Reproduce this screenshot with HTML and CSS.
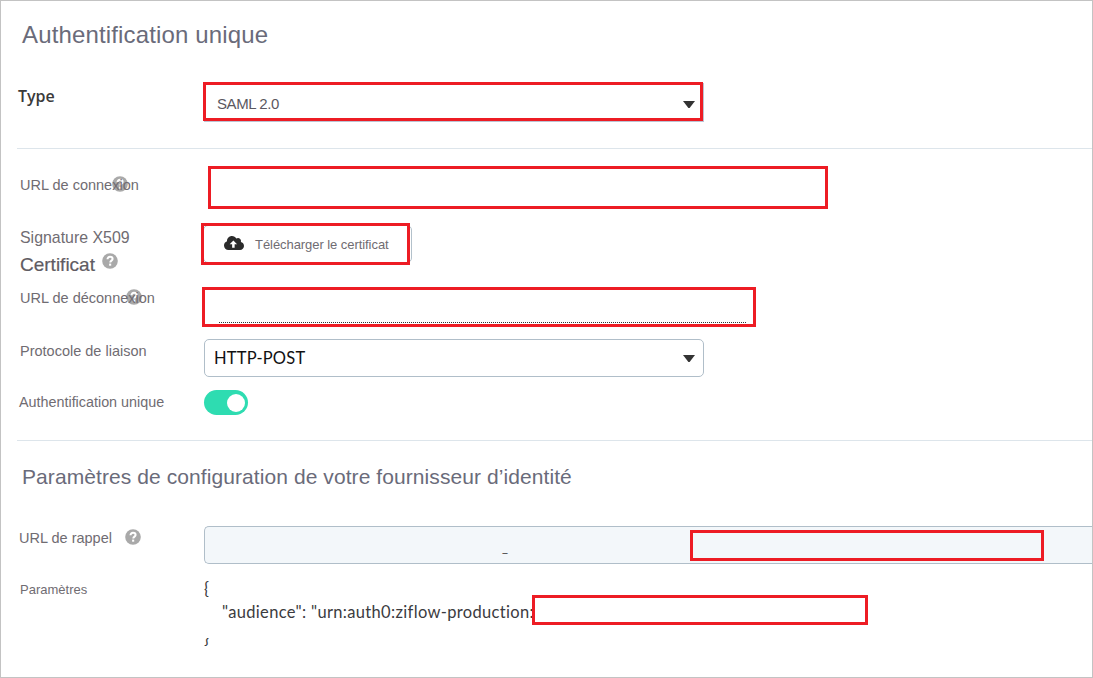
FILE: index.html
```html
<!DOCTYPE html>
<html lang="fr">
<head>
<meta charset="utf-8">
<title>Authentification unique</title>
<link rel="stylesheet" href="styles.css">
</head>
<body>
<svg width="0" height="0" class="defs">
  <symbol id="help" viewBox="0 0 16 16">
    <circle cx="8" cy="8" r="7.8" fill="#a9a9a9"/>
    <path d="M5.5 6.3C5.5 4.6 6.6 3.8 8 3.8s2.6.9 2.6 2.2c0 1.6-2.3 1.7-2.3 3.4" fill="none" stroke="#fff" stroke-width="2"/>
    <path d="M7.1 10.6h2.1v2.1H7.1z" fill="#fff"/>
  </symbol>
</svg>
<main class="page">
  <header class="heading"><h1 class="title">Authentification unique</h1></header>

  <section class="group">
    <div class="row row-type">
      <div class="label type-label">Type</div>
      <div class="marked type-select"><span>SAML 2.0</span><i class="caret"></i></div>
    </div>
  </section>

  <section class="group">
    <div class="row row-login">
      <div class="label">URL de connexion<svg class="help over"><use href="#help"/></svg></div>
      <div class="marked login-input"></div>
    </div>
    <div class="row row-cert">
      <div class="label cert-label">
        <div class="signature">Signature X509</div>
        <div class="cert-line"><span>Certificat</span><svg class="help"><use href="#help"/></svg></div>
      </div>
      <div class="upload-wrap">
        <div class="upload">
          <svg class="cloud" viewBox="0 32 640 448"><path fill="#2b2b2b" d="M537.6 226.6c4.1-10.7 6.4-22.4 6.4-34.6 0-53-43-96-96-96-19.7 0-38.1 6-53.3 16.2C367 64.2 315.3 32 256 32c-88.4 0-160 71.6-160 160 0 2.7.1 5.4.2 8.1C40.2 219.8 0 273.2 0 336c0 79.5 64.5 144 144 144h368c70.7 0 128-57.3 128-128 0-61.9-44-113.6-102.4-125.4z"/><path fill="#fff" d="M300 172L418 292H340V410H260V292H182z"/></svg>
          <span>Télécharger le certificat</span>
        </div>
      </div>
    </div>
    <div class="row row-logout">
      <div class="label">URL de déconnexion<svg class="help over"><use href="#help"/></svg></div>
      <div class="marked logout-input"><div class="dots"></div></div>
    </div>
    <div class="row row-binding">
      <div class="label">Protocole de liaison</div>
      <div class="select"><span>HTTP-POST</span><i class="caret"></i></div>
    </div>
    <div class="row row-sso">
      <div class="label">Authentification unique</div>
      <div class="toggle"><i class="knob"></i></div>
    </div>
  </section>

  <header class="heading second"><h2 class="subtitle">Paramètres de configuration de votre fournisseur d’identité</h2></header>

  <section class="group last">
    <div class="row row-callback">
      <div class="label callback-label"><span>URL de rappel</span><svg class="help"><use href="#help"/></svg></div>
      <div class="callback"><span class="underscore">_</span><div class="marked callback-mark"></div></div>
    </div>
    <div class="row row-params">
      <div class="label params-label">Paramètres</div>
      <div class="code">
        <div>{</div>
        <div class="audience"><span>"audience": "urn:auth0:ziflow-production:</span><i class="marked audience-mark"></i></div>
        <div class="closing">}</div>
      </div>
    </div>
  </section>
</main>
</body>
</html>
```
FILE: styles.css
```css
* { box-sizing: border-box; }
body { margin: 0; background: #fff; }
.defs { position: absolute; }
.page {
  width: 1093px; height: 678px; overflow: hidden;
  border: 1px solid #c3c3c3;
  font: 14.5px/20px "Liberation Sans", Arial, sans-serif;
  color: #706c72;
}
.heading { height: 75px; padding: 20px 0 0 21px; }
.title, .subtitle { margin: 0; font-weight: 400; line-height: 28px; color: #6a6b7a; white-space: nowrap; }
.title { font-size: 24px; letter-spacing: .15px; }
.subtitle { font-size: 21px; letter-spacing: .08px; }
.group { margin-left: 16px; border-bottom: 1px solid #dde5eb; }
.group.last { border: 0; }
.row { display: flex; align-items: flex-start; }
.label { position: relative; flex: none; width: 187px; padding-left: 3px; white-space: nowrap; }
.marked { border: 3px solid #ed1c24; }
.help { display: block; width: 16px; height: 16px; }
.over { position: absolute; z-index: -1; }
.caret {
  width: 12px; height: 7px; background: #333;
  clip-path: polygon(0 0, 100% 0, 55% 100%, 45% 100%);
}

.row-type { height: 72px; }
.type-label { margin-top: 10px; padding-left: 1px; width: 186px; font: 600 16px/20px "Open Sans", sans-serif; color: #3a3a3a; }
.type-select {
  display: flex; justify-content: space-between; width: 500px; height: 39px; margin-top: 6px;
  padding: 9px 5px 0 11px; font-size: 15px; letter-spacing: -.42px; color: #5b585f;
  box-shadow: 1px 1px 0 #bcc3d3;
}
.type-select .caret { margin-top: 7px; }

.row-login { height: 66px; }
.row-login .label { width: 191px; margin-top: 26px; }
.row-login .over { left: 95px; top: 1px; }
.login-input { width: 620px; height: 43px; margin-top: 17px; }

.row-cert { height: 65px; }
.cert-label { width: 184px; margin-top: 13px; }
.signature { font-size: 15.9px; }
.cert-line { display: flex; gap: 7px; margin-top: 5px; font-size: 19px; line-height: 24px; color: #5f5b62; -webkit-text-stroke: .2px #5f5b62; }
.upload-wrap { position: relative; width: 211px; height: 42px; margin-top: 8px; padding: 2px 0 0 2px; }
.upload-wrap::after { content: ""; box-sizing: border-box; position: absolute; left: 0; top: 0; width: 209px; height: 42px; border: 3px solid #ed1c24; }
.upload {
  display: flex; width: 209px; height: 38px; padding: 9px 0 0 20px; gap: 11px;
  border: 1px solid #b3c1cb; border-radius: 5px; font-size: 13px; letter-spacing: -.06px; white-space: nowrap;
}
.cloud { width: 20px; height: 14px; margin-top: 1px; }

.row-logout { height: 52px; }
.row-logout .label { width: 185px; margin-top: 8px; }
.row-logout .over { left: 109px; top: 1px; }
.logout-input { width: 554px; height: 40px; margin-top: 7px; padding: 32px 7px 0 14px; }
.dots { height: 1px; background: repeating-linear-gradient(90deg, #333 0 1px, #fff 1px 2px); }

.row-binding { height: 52px; }
.row-binding .label { margin-top: 9px; }
.select {
  display: flex; justify-content: space-between; width: 500px; height: 38px; margin-top: 7px;
  padding: 8px 8px 0 9px; border: 1px solid #b0bec9; border-radius: 5px;
  font: 16.5px/20px Lato, sans-serif; letter-spacing: .2px; color: #111;
}
.select .caret { margin-top: 7px; }

.row-sso { height: 56px; }
.row-sso .label { margin-top: 8px; padding-left: 2px; font-size: 14.35px; }
.toggle { width: 44px; height: 25px; margin-top: 6px; padding: 4px 0 0 23px; border-radius: 13px; background: #2edcb1; }
.knob { display: block; width: 18px; height: 18px; border-radius: 50%; background: #fff; }

.second { height: 74px; padding-top: 22px; }
.row-callback { height: 55px; }
.callback-label { display: flex; gap: 13px; margin-top: 13px; padding-left: 2px; }
.callback-label .help { margin-top: 1px; }
.callback {
  display: flex; flex: 1; height: 38px; margin-top: 11px; padding: 3px 48px 0 297px; justify-content: space-between;
  border: 1px solid #b0bec9; border-right: 0; border-radius: 5px 0 0 5px; background: #f3f7fa;
}
.underscore { font: 13px/20px Lato, sans-serif; margin-top: 7px; color: #444; }
.callback-mark { width: 354px; height: 31px; }

.params-label { margin-top: 10px; font-size: 13px; }
.code { margin-top: 8px; font: 16.5px/23px Lato, sans-serif; color: #3b3b40; }
.audience { display: flex; align-items: flex-start; height: 23px; padding-left: 18px; }
.audience span { width: 310px; white-space: nowrap; letter-spacing: .33px; }
.audience-mark { flex: none; width: 336px; height: 30px; margin-top: -6px; }
/* Only the lower hook of the closing brace shows */
.closing { margin-top: 3px; clip-path: inset(11px 0 0 0); }
```
